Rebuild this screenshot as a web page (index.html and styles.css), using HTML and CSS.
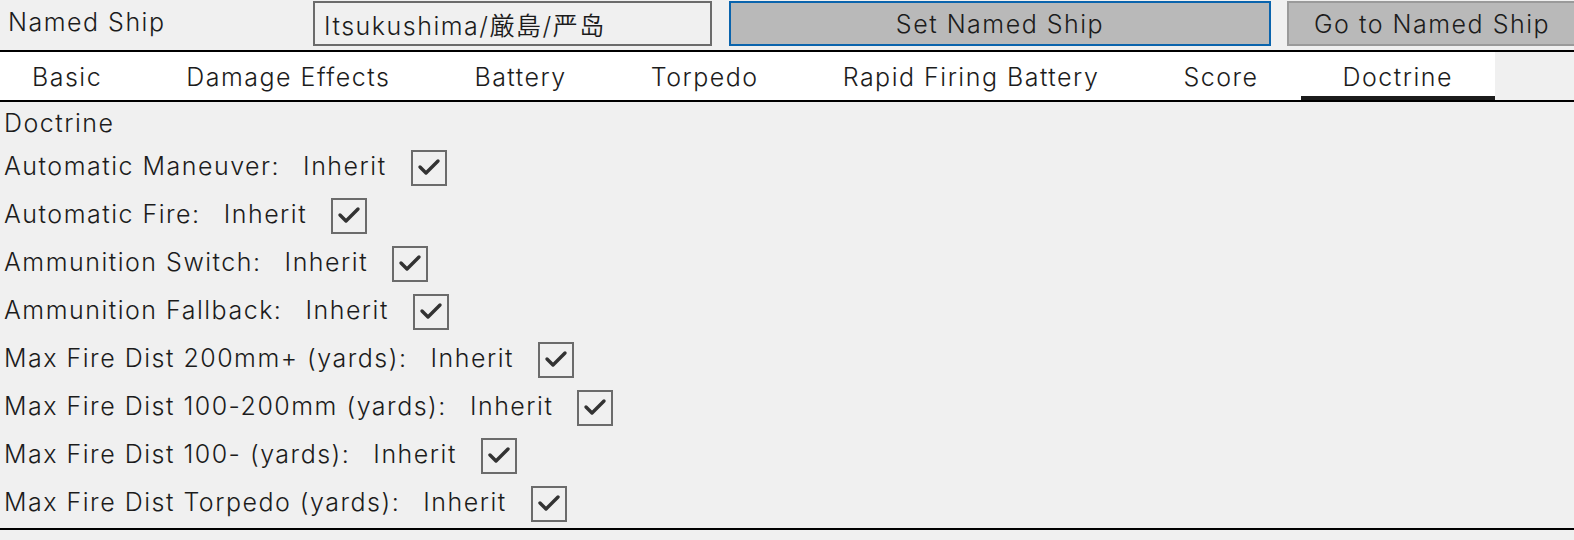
FILE: index.html
```html
<!DOCTYPE html>
<html>
<head>
<meta charset="utf-8">
<link rel="stylesheet" href="styles.css">
</head>
<body>
<div class="app">
  <header class="topbar">
    <span class="topbar-label">Named Ship</span>
    <div class="text-input">Itsukushima/厳島/严岛</div>
    <button class="btn btn-focused">Set Named Ship</button>
    <button class="btn btn-go">Go to Named Ship</button>
  </header>
  <nav class="tabbar">
    <div class="tabs">
      <div class="tab tab-first">Basic</div>
      <div class="tab">Damage Effects</div>
      <div class="tab">Battery</div>
      <div class="tab">Torpedo</div>
      <div class="tab">Rapid Firing Battery</div>
      <div class="tab">Score</div>
      <div class="tab tab-active">Doctrine</div>
    </div>
  </nav>
  <section class="panel">
    <div class="panel-title">Doctrine</div>
    <div class="row"><span class="row-label">Automatic Maneuver:</span><span class="row-value">Inherit</span><span class="check"><svg viewBox="0 0 32 32"><path d="M7 15 L13 21 L25 9"/></svg></span></div>
    <div class="row"><span class="row-label">Automatic Fire:</span><span class="row-value">Inherit</span><span class="check"><svg viewBox="0 0 32 32"><path d="M7 15 L13 21 L25 9"/></svg></span></div>
    <div class="row"><span class="row-label">Ammunition Switch:</span><span class="row-value">Inherit</span><span class="check"><svg viewBox="0 0 32 32"><path d="M7 15 L13 21 L25 9"/></svg></span></div>
    <div class="row"><span class="row-label">Ammunition Fallback:</span><span class="row-value">Inherit</span><span class="check"><svg viewBox="0 0 32 32"><path d="M7 15 L13 21 L25 9"/></svg></span></div>
    <div class="row"><span class="row-label">Max Fire Dist 200mm+ (yards):</span><span class="row-value">Inherit</span><span class="check"><svg viewBox="0 0 32 32"><path d="M7 15 L13 21 L25 9"/></svg></span></div>
    <div class="row"><span class="row-label">Max Fire Dist 100-200mm (yards):</span><span class="row-value">Inherit</span><span class="check"><svg viewBox="0 0 32 32"><path d="M7 15 L13 21 L25 9"/></svg></span></div>
    <div class="row"><span class="row-label">Max Fire Dist 100- (yards):</span><span class="row-value">Inherit</span><span class="check"><svg viewBox="0 0 32 32"><path d="M7 15 L13 21 L25 9"/></svg></span></div>
    <div class="row"><span class="row-label">Max Fire Dist Torpedo (yards):</span><span class="row-value">Inherit</span><span class="check"><svg viewBox="0 0 32 32"><path d="M7 15 L13 21 L25 9"/></svg></span></div>
  </section>
</div>
</body>
</html>
```

FILE: styles.css
```css
html, body {
  margin: 0;
  padding: 0;
  background: #f0f0f0;
  overflow: hidden;
}
body {
  width: 1574px;
  height: 540px;
  font-family: Inter, "Noto Sans CJK JP", "Noto Sans CJK SC", sans-serif;
  font-size: 25px;
  font-weight: 350;
  letter-spacing: 1.5px;
  color: #1c1c1c;
}
.app {
  display: flex;
  flex-direction: column;
}
.topbar {
  display: flex;
  align-items: stretch;
  height: 45px;
  padding-top: 1px;
  padding-bottom: 4px;
}
.topbar-label {
  width: 305px;
  padding-left: 8px;
  display: flex;
  align-items: center;
  padding-bottom: 3px;
  flex: none;
}
.text-input {
  width: 399px;
  box-sizing: border-box;
  border: 2px solid #6b6b6b;
  background: #f0f0f0;
  padding-left: 9px;
  display: flex;
  align-items: center;
  flex: none;
}
.btn {
  font: inherit;
  letter-spacing: inherit;
  color: #1c1c1c;
  background: #b9b9b9;
  box-sizing: border-box;
  border: 2px solid #9a9a9a;
  padding: 0;
  margin: 0;
  flex: none;
}
.btn-focused {
  width: 542px;
  margin-left: 17px;
  border-color: #0a64ad;
}
.btn-go {
  width: 300px;
  margin-left: 16px;
  text-align: left;
  padding-left: 25px;
}
.tabbar {
  border-top: 2px solid #000;
  border-bottom: 2px solid #000;
  height: 48px;
}
.tabs {
  display: flex;
  height: 100%;
  width: max-content;
  background: #fff;
}
.tab {
  padding: 5px 42px 0;
  display: flex;
  align-items: center;
  box-sizing: border-box;
  border-bottom: 4px solid transparent;
}
.tab-first {
  padding-left: 32px;
}
.tab-active {
  border-bottom-color: #1c1c1c;
}
.panel {
  border-bottom: 2px solid #000;
  padding-left: 4px;
}
.panel-title {
  height: 42px;
  display: flex;
  align-items: center;
}
.row {
  height: 48px;
  display: flex;
  align-items: center;
}
.row-label,
.row-value {
  padding-bottom: 4px;
}
.row-label {
  margin-right: 23px;
}
.row-value {
  margin-right: 24px;
}
.check {
  width: 36px;
  height: 36px;
  box-sizing: border-box;
  border: 2px solid #6b6b6b;
  display: flex;
}
.check svg {
  width: 100%;
  height: 100%;
  fill: none;
  stroke: #333;
  stroke-width: 3.4;
  stroke-linecap: round;
  stroke-linejoin: round;
}
```
